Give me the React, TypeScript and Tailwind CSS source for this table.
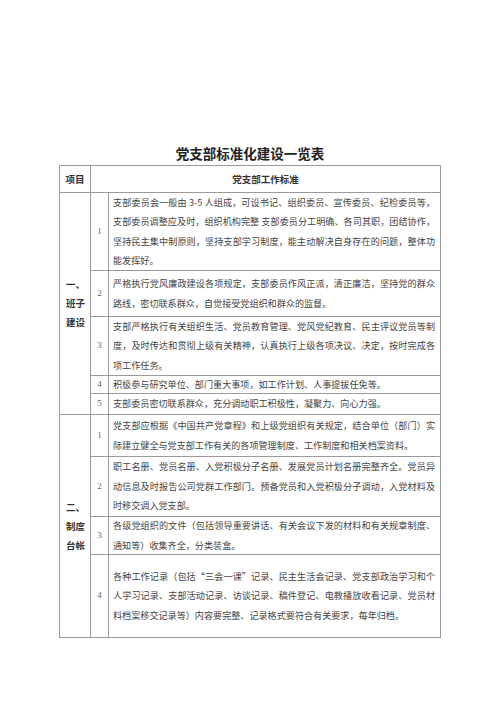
const FONT = { fontFamily: '"Noto Sans CJK SC", "Noto Sans", sans-serif' }

type Row = { no: string; h: string; lines: string[] }
type Section = { label: string[]; rows: Row[] }

const sections: Section[] = [
  {
    label: ['一、', '班子', '建设'],
    rows: [
      {
        no: '1',
        h: 'h-[78px]',
        lines: [
          '支部委员会一般由 3-5 人组成，可设书记、组织委员、宣传委员、纪检委员等，',
          '支部委员调整应及时，组织机构完整 支部委员分工明确、各司其职，团结协作，',
          '坚持民主集中制原则，坚持支部学习制度，能主动解决自身存在的问题，整体功',
          '能发挥好。',
        ],
      },
      {
        no: '2',
        h: 'h-[46px]',
        lines: [
          '严格执行党风廉政建设各项规定，支部委员作风正派，清正廉洁，坚持党的群众',
          '路线，密切联系群众，自觉接受党组织和群众的监督。',
        ],
      },
      {
        no: '3',
        h: 'h-[59px]',
        lines: [
          '支部严格执行有关组织生活、党员教育管理、党风党纪教育、民主评议党员等制',
          '度，及时传达和贯彻上级有关精神，认真执行上级各项决议、决定，按时完成各',
          '项工作任务。',
        ],
      },
      { no: '4', h: 'h-[18px]', lines: ['积极参与研究单位、部门重大事项，如工作计划、人事提拔任免等。'] },
      { no: '5', h: 'h-[20px]', lines: ['支部委员密切联系群众，充分调动职工积极性，凝聚力、向心力强。'] },
    ],
  },
  {
    label: ['二、', '制度', '台帐'],
    rows: [
      {
        no: '1',
        h: 'h-[42px]',
        lines: [
          '党支部应根据《中国共产党章程》和上级党组织有关规定，结合单位（部门）实',
          '际建立健全与党支部工作有关的各项管理制度、工作制度和相关档案资料。',
        ],
      },
      {
        no: '2',
        h: 'h-[60px]',
        lines: [
          '职工名册、党员名册、入党积极分子名册、发展党员计划名册完整齐全。党员异',
          '动信息及时报告公司党群工作部门。预备党员和入党积极分子调动，入党材料及',
          '时移交调入党支部。',
        ],
      },
      {
        no: '3',
        h: 'h-[38px]',
        lines: [
          '各级党组织的文件（包括领导重要讲话、有关会议下发的材料和有关规章制度、',
          '通知等）收集齐全，分类装盒。',
        ],
      },
      {
        no: '4',
        h: 'h-[82px]',
        lines: [
          '各种工作记录（包括“三会一课”记录、民主生活会记录、党支部政治学习和个',
          '人学习记录、支部活动记录、访谈记录、稿件登记、电教播放收看记录、党员材',
          '料档案移交记录等）内容要完整、记录格式要符合有关要求，每年归档。',
        ],
      },
    ],
  },
]

function StandardRow({ row, last }: { row: Row; last: boolean }) {
  return (
    <div className={`flex ${row.h} ${last ? '' : 'border-b border-[#9a9a9a]'}`}>
      <div
        className="w-[18px] shrink-0 border-r border-[#9a9a9a] flex items-center justify-center text-[9px] text-[#666]"
        style={{ fontFamily: '"Liberation Serif", serif' }}
      >
        {row.no}
      </div>
      <div className="flex-1 flex flex-col justify-center pl-[4px] pr-[5px] text-[9.1px] leading-[19.5px] text-[#444]">
        {row.lines.map((line, i) => (
          <div
            key={i}
            className={`whitespace-nowrap ${i < row.lines.length - 1 ? 'text-justify [text-align-last:justify]' : ''}`}
          >
            {line}
          </div>
        ))}
      </div>
    </div>
  )
}

export default function App() {
  return (
    <div className="w-[500px] h-[707px] bg-white pt-[144px]" style={FONT}>
      <h1 className="text-center text-[13.5px] leading-[18px] font-bold text-[#222]">党支部标准化建设一览表</h1>

      <div className="mt-[3px] ml-[59px] w-[382px] border border-[#9a9a9a]">
        <div className="flex h-[27px] border-b border-[#9a9a9a] text-[9.5px] font-bold text-[#333]">
          <div className="w-[31px] shrink-0 border-r border-[#9a9a9a] flex items-center justify-center">项目</div>
          <div className="flex-1 flex items-center justify-center">党支部工作标准</div>
        </div>

        {sections.map((section, si) => (
          <div
            key={si}
            className={`flex ${si < sections.length - 1 ? 'border-b border-[#9a9a9a]' : ''}`}
          >
            <div className="w-[31px] shrink-0 border-r border-[#9a9a9a] flex flex-col justify-center pl-[6px] text-[9.5px] leading-[19px] font-bold text-[#333]">
              {section.label.map((l) => (
                <div key={l}>{l}</div>
              ))}
            </div>
            <div className="flex-1 flex flex-col">
              {section.rows.map((row, ri) => (
                <StandardRow key={ri} row={row} last={ri === section.rows.length - 1} />
              ))}
            </div>
          </div>
        ))}
      </div>
    </div>
  )
}
